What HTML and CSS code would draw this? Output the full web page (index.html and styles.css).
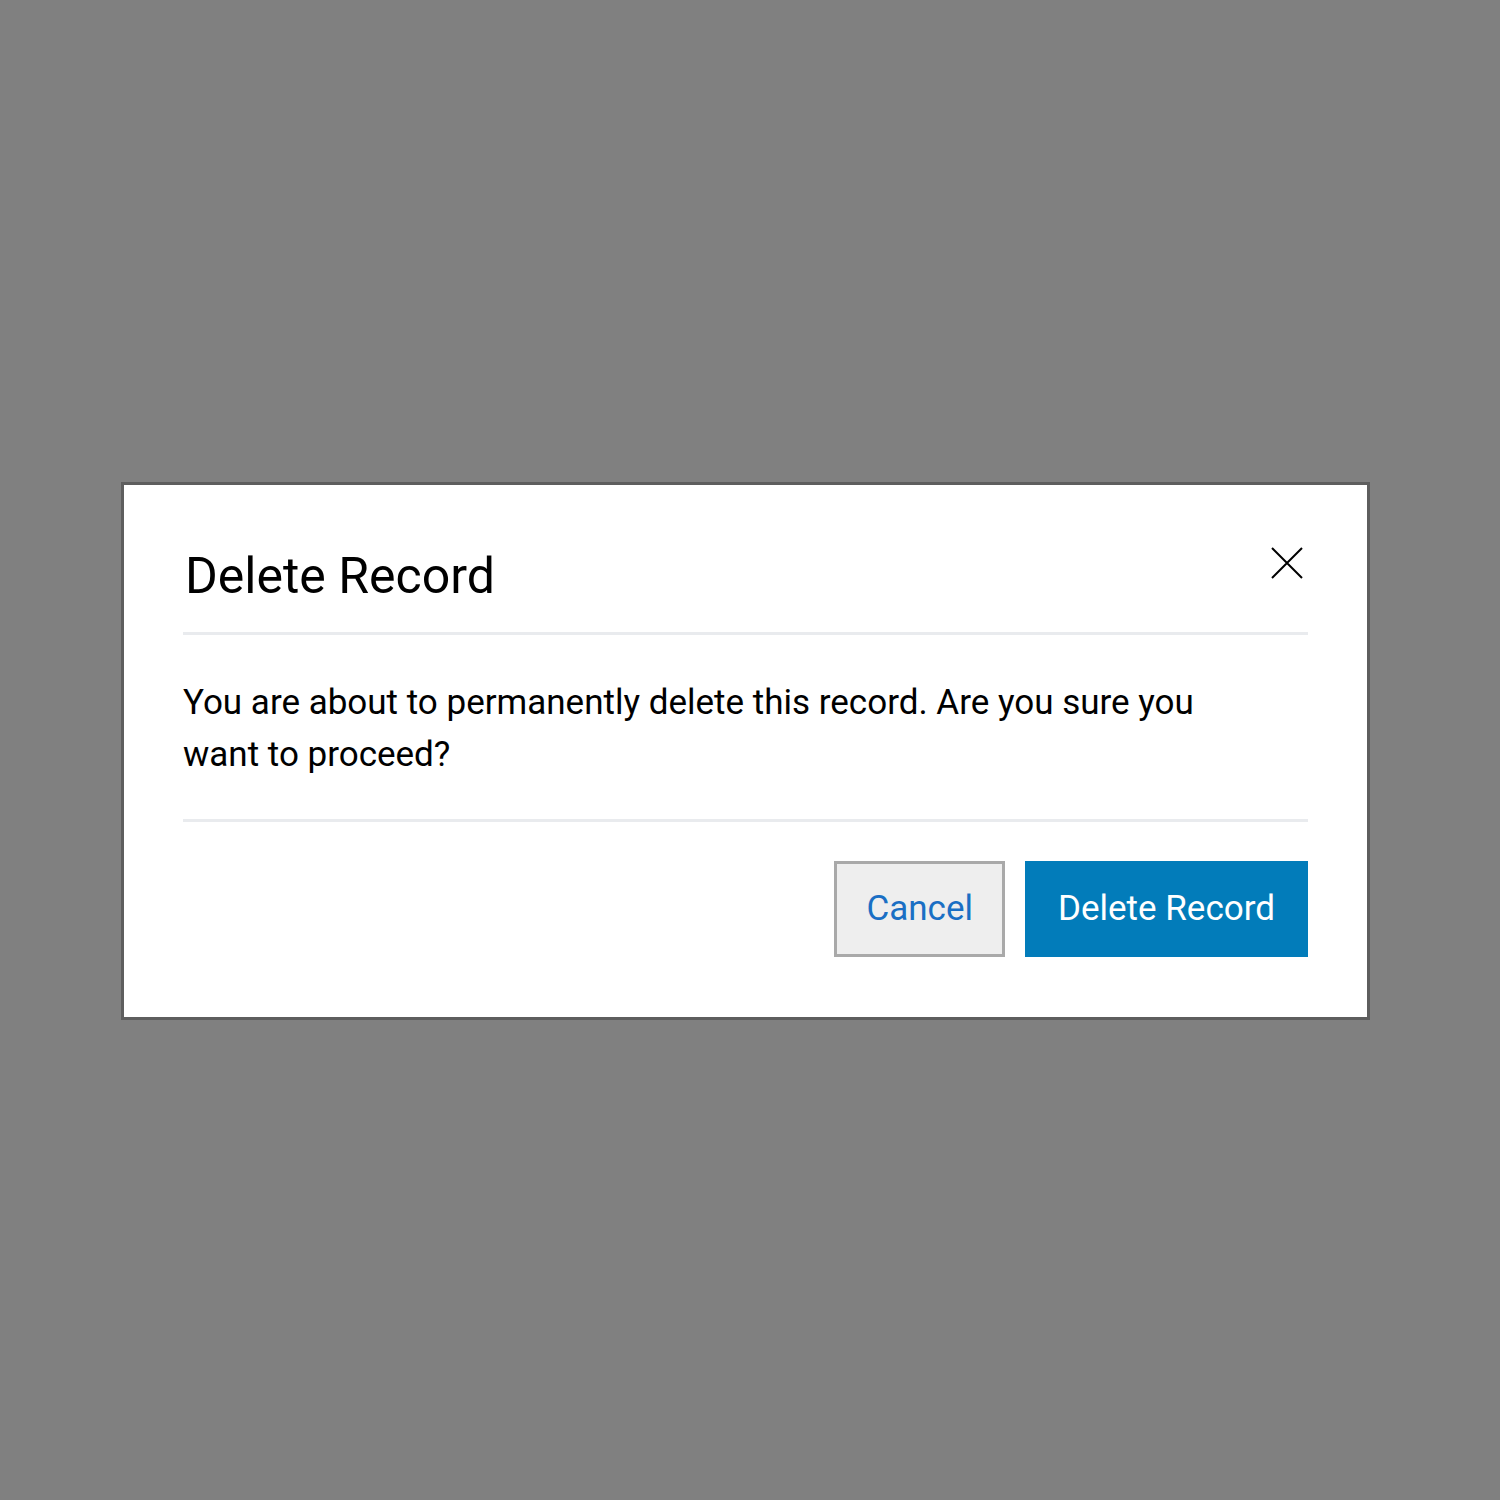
FILE: index.html
```html
<!doctype html>
<html lang="en-us">
  <head>
    <title>Delete Record</title>
    <link rel="stylesheet" href="styles.css">
  </head>
  <body>
    <div id="overlay">
      <div id="modal">
        <div id="modalHeader">
          <h2 id="modalTitle">Delete Record</h2>
          <button id="close" aria-label="Close">
            <svg width="32" height="32" viewBox="0 0 32 32">
              <path d="M1 1 L31 31 M31 1 L1 31" stroke="#000" stroke-width="2" fill="none"/>
            </svg>
          </button>
        </div>
        <div id="modalBody">
          <p>You are about to permanently delete this record. Are you sure you want to proceed?</p>
        </div>
        <div id="modalFooter">
          <button class="btn" id="cancel">Cancel</button>
          <button class="btn" id="confirm">Delete Record</button>
        </div>
      </div>
    </div>
  </body>
</html>
```

FILE: styles.css
```css
body {
  margin: 0;
  background-color: #808080;
  font-family: Roboto, "Liberation Sans", sans-serif;
}

#overlay {
  min-height: 100vh;
  box-sizing: border-box;
  display: flex;
  justify-content: center;
  align-items: center;
  padding-right: 9px;
  padding-top: 2px;
}

#modal {
  width: 1249px;
  box-sizing: border-box;
  background-color: white;
  border: 3px solid #5e5e5e;
  padding: 0px 59px 60px 59px;
}

#modalHeader {
  display: flex;
  justify-content: space-between;
  align-items: flex-start;
  padding-top: 61px;
  padding-bottom: 26px;
  border-bottom: 3px solid #e9ebee;
}

#modalTitle {
  margin: 0;
  margin-left: 2px;
  font-size: 50px;
  font-weight: normal;
  line-height: 60px;
  color: black;
}

#close {
  border: none;
  background: none;
  padding: 0;
  margin-top: 1px;
  margin-right: 5px;
  width: 32px;
  height: 32px;
}

#modalBody {
  padding: 42px 0px 38px 0px;
  border-bottom: 3px solid #e9ebee;
}

#modalBody p {
  margin: 0;
  max-width: 1040px;
  font-size: 35px;
  line-height: 52px;
  color: black;
}

#modalFooter {
  display: flex;
  justify-content: flex-end;
  gap: 20px;
  padding-top: 39px;
}

.btn {
  font-family: Roboto, "Liberation Sans", sans-serif;
  font-size: 35px;
  line-height: 36px;
  padding: 27px 30px;
  border: 3px solid;
}

#cancel {
  background-color: #eeeeee;
  border-color: #a9a9a9;
  color: #1a6fc4;
  padding: 27px 29px;
}

#confirm {
  background-color: #027cba;
  border-color: #027cba;
  color: white;
}
```
